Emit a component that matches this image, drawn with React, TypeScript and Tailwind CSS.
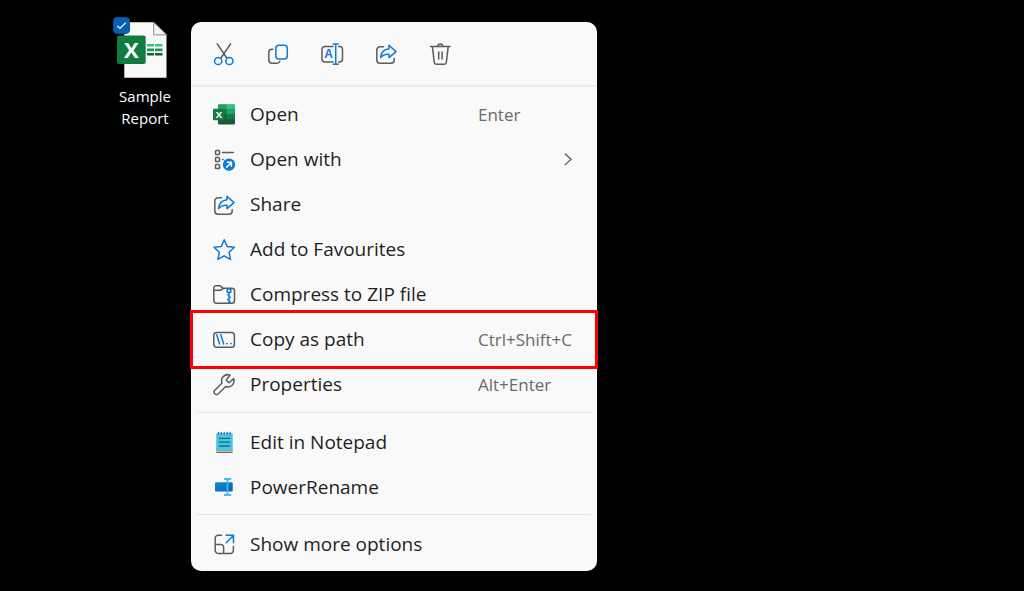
import type { ReactNode } from "react";

const GREY = "#5c5c5c";
const BLUE = "#0a7bd6";

function Icon({ children }: { children: ReactNode }) {
  return (
    <svg
      viewBox="0 0 24 24"
      className="size-6 shrink-0"
      fill="none"
      stroke={GREY}
      strokeWidth="1.5"
      strokeLinecap="round"
      strokeLinejoin="round"
      aria-hidden="true"
    >
      {children}
    </svg>
  );
}

const CutIcon = () => (
  <Icon>
    <path d="M5.2 1.8 14.8 16M18.6 1.8 9 16" />
    <circle cx="6.2" cy="19" r="3.6" stroke={BLUE} />
    <circle cx="17.4" cy="19" r="3.6" stroke={BLUE} />
  </Icon>
);

const CopyIcon = () => (
  <Icon>
    <path d="M6.8 7.3H6A3.2 3.2 0 0 0 2.8 10.5V18A3.2 3.2 0 0 0 6 21.2H10.8A3.2 3.2 0 0 0 13.8 19.2" />
    <rect x="9.9" y="3.3" width="11.4" height="13.8" rx="3" stroke={BLUE} />
  </Icon>
);

const RenameIcon = () => (
  <Icon>
    <path d="M13 4.5H5A3 3 0 0 0 2 7.500V17A3 3 0 0 0 5 20H13M18.500 4.500H19.500A3 3 0 0 1 22.500 7.500V17A3 3 0 0 1 19.500 20H18.500" />
    <path d="M15.700 2V22.300M12.700 2H18.700M12.700 22.300H18.700" stroke={BLUE} strokeLinecap="butt" />
    <text
      x="8.500"
      y="16.200"
      textAnchor="middle"
      fontSize="12"
      fontFamily="Liberation Sans, sans-serif"
      fontWeight="700"
      fill={BLUE}
      stroke="none"
    >
      A
    </text>
  </Icon>
);

const ShareIcon = () => (
  <Icon>
    <path d="M9.500 4.800H6A3.200 3.200 0 0 0 2.800 8V18A3.200 3.200 0 0 0 6 21.200H17A3.200 3.200 0 0 0 20.200 18V16.500" />
    <path
      d="M15 3.300 22 9.600 15 15.600V12.300C11.500 12 8.800 13 6.600 15.600 7 10.500 9.800 7.200 15 6.700Z"
      stroke={BLUE}
    />
  </Icon>
);

const DeleteIcon = () => (
  <Icon>
    <path d="M2.600 4.600H22M4.400 4.600 6.300 20.600A2 2 0 0 0 8.200 22.200H16.400A2 2 0 0 0 18.300 20.600L20.200 4.600M9.800 4.400A2.500 2.500 0 0 1 14.800 4.400M10.700 10V17M14.100 10V17" />
  </Icon>
);

const ExcelIcon = () => (
  <Icon>
    <g stroke="none">
      <rect x="6" y="1.500" width="17" height="20" rx="1.200" fill="#185c37" />
      <path d="M7.200 1.500H14.500V6.500H6V2.700A1.200 1.200 0 0 1 7.200 1.500Z" fill="#21a366" />
      <path d="M14.500 1.500H21.800A1.200 1.200 0 0 1 23 2.700V6.500H14.500Z" fill="#33c481" />
      <path d="M6 6.500H14.500V11.500H6Z" fill="#107c41" />
      <path d="M14.500 6.500H23V11.500H14.500Z" fill="#21a366" />
      <path d="M14.500 11.500H23V16.500H14.500Z" fill="#107c41" />
      <rect x="1" y="5.800" width="11.500" height="11.500" rx="1" fill="#107c41" />
      <text
        x="6.800"
        y="15"
        textAnchor="middle"
        fontSize="9.500"
        fontFamily="Open Sans, sans-serif"
        fontWeight="700"
        fill="#ffffff"
      >
        X
      </text>
    </g>
  </Icon>
);

const OpenWithIcon = () => (
  <Icon>
    <rect x="3.500" y="2.600" width="4" height="4" rx="0.800" />
    <rect x="3.500" y="9.600" width="4" height="4" rx="0.800" />
    <rect x="3.500" y="16.600" width="4" height="4" rx="0.800" />
    <path d="M10.500 4.500H21.300M10.500 11.500H11" />
    <circle cx="17" cy="16.700" r="6.200" fill={BLUE} stroke="none" />
    <path d="M14.600 19.100 19.200 14.500M15.400 14.300H19.400V18.300" stroke="#ffffff" />
  </Icon>
);

const StarIcon = () => (
  <Icon>
    <path
      d="M12.200 1.800 15.200 8.600 22.400 9.300 17 14.200 18.500 21.400 12.200 17.800 5.900 21.400 7.400 14.200 2 9.300 9.200 8.600Z"
      stroke={BLUE}
    />
  </Icon>
);

const ZipIcon = () => (
  <Icon>
    <path d="M1.800 7.200V5A2.200 2.200 0 0 1 4 2.800H8.200L11.300 5.300H20A2.500 2.500 0 0 1 22.500 7.800V17.800A2.500 2.500 0 0 1 20 20.300H4.300A2.500 2.500 0 0 1 1.800 17.800V7.200H8.800L11.300 5.300" />
    <path
      d="M15.200 6H18.800V9.300H15.200ZM17 9.300V19.800M17 11.800H15.700M17 14.200H18.300M17 16.600H15.700M17 19H18.300"
      stroke={BLUE}
    />
  </Icon>
);

const PathIcon = () => (
  <Icon>
    <rect x="1.800" y="4.400" width="20.600" height="14.900" rx="3" />
    <path d="M4.700 6.800 7.600 16M8.800 6.800 11.700 16" stroke={BLUE} />
    <path d="M14.800 15.600H15M18.800 15.600H19" stroke={BLUE} strokeWidth="1.700" />
  </Icon>
);

const WrenchIcon = () => (
  <Icon>
    <path d="M14.700 6.300a1 1 0 0 0 0 1.400l1.600 1.600a1 1 0 0 0 1.400 0l3.900-3.700a6.100 6.100 0 0 1-8 7.900l-7.500 7.500a2.500 2.500 0 0 1-3.500-3.500l7.400-7.500a6.100 6.100 0 0 1 8.100-7.800z" />
  </Icon>
);

const NotepadIcon = () => (
  <Icon>
    <g stroke="none">
      <rect x="4.200" y="18" width="16.500" height="4" rx="0.800" fill="#a85a24" />
      <rect x="4.200" y="19" width="16.500" height="1.600" fill="#f3e9df" />
      <rect x="4.200" y="2.200" width="16.500" height="17.800" rx="1" fill="#4cc3e0" />
    </g>
    <path d="M6.500 1.300V3M9.300 1.300V3M12.200 1.300V3M15.100 1.300V3M18 1.300V3" stroke="#17668a" strokeWidth="1.200" />
    <path d="M7.300 7.400H17.600M7.300 11.200H17.600M7.300 15H17.600" stroke="#0e6f96" strokeWidth="1.300" />
  </Icon>
);

const PowerRenameIcon = () => (
  <Icon>
    <defs>
      <linearGradient id="rename-field" x1="0" y1="0" x2="1" y2="1">
        <stop offset="0" stopColor="#1389dc" />
        <stop offset="1" stopColor="#0b5fae" />
      </linearGradient>
    </defs>
    <rect x="3" y="6.200" width="17.700" height="9.300" rx="1" fill="url(#rename-field)" stroke="none" />
    <path
      d="M15.500 3.200V19M12.700 3H14.300L15.500 3.800 16.700 3H18.500M12.700 19H14.300L15.500 18.200 16.700 19H18.500"
      stroke="#35bdf0"
      strokeWidth="1.800"
    />
  </Icon>
);

const MoreIcon = () => (
  <Icon>
    <path d="M9.600 2.200H6.400A3 3 0 0 0 3.200 5.200V17.200A3 3 0 0 0 6.400 20.400H18.400A3 3 0 0 0 21.400 17.200V13.500M3.200 11.600H8.900A2.600 2.600 0 0 1 11.600 14.200V20.400" />
    <path d="M14.200 9.800 21.400 2.400M14 2.200H21.500V9.800" stroke={BLUE} />
  </Icon>
);

const ChevronIcon = () => (
  <svg viewBox="0 0 10 16" className="h-4 w-2.5" fill="none" stroke={GREY} strokeWidth="1.300" aria-hidden="true">
    <path d="M1.800 1.500 8 7.300 1.800 13.100" />
  </svg>
);

interface ItemProps {
  icon: ReactNode;
  label: string;
  shortcut?: string;
  submenu?: boolean;
  highlighted?: boolean;
}

function MenuItem({ icon, label, shortcut, submenu, highlighted }: ItemProps) {
  return (
    <li className="relative" role="none">
      <button
        type="button"
        role="menuitem"
        className="flex h-[45px] w-full items-center gap-3.5 pr-5 pl-[21px] text-left text-[19px] text-[#1f1f1f]"
      >
        {icon}
        <span className="grow whitespace-nowrap">{label}</span>
        {shortcut && <span className="w-[99px] shrink-0 whitespace-nowrap text-[17px] text-[#6a6a6a]">{shortcut}</span>}
        {submenu && (
          <span className="mr-1">
            <ChevronIcon />
          </span>
        )}
      </button>
      {highlighted && (
        <span className="pointer-events-none absolute -inset-x-px -inset-y-[7px] z-10 border-3 border-[#fb0000]" />
      )}
    </li>
  );
}

const actions = [
  { label: "Cut", icon: <CutIcon /> },
  { label: "Copy", icon: <CopyIcon /> },
  { label: "Rename", icon: <RenameIcon /> },
  { label: "Share", icon: <ShareIcon /> },
  { label: "Delete", icon: <DeleteIcon /> },
];

function DesktopFile() {
  return (
    <label className="mt-4 flex w-[92px] shrink-0 flex-col text-center text-[15px] leading-[22px] text-white">
      <span className="relative mb-[5px] ml-[13px] block w-14">
        <svg viewBox="0 0 56 64" className="h-16 w-14" aria-hidden="true">
          <path d="M12.300 6.200H41.500L54.500 18.800V61.700H12.300Z" fill="#fafafa" />
          <path d="M41.700 6.200V18.800H54.500Z" fill="#f4f4f4" stroke="#8a8a8a" strokeWidth="1" />
          <path d="M35 28H42V30.600H35ZM43 28H50.500V30.600H43Z" fill="#33c481" />
          <path d="M35 32.600H42V35.200H35ZM43 32.600H50.500V35.200H43Z" fill="#189a57" />
          <path d="M35 37H42V39.600H35ZM43 37H50.500V39.600H43Z" fill="#185c37" />
          <rect x="5" y="19.600" width="28.700" height="28.500" rx="2" fill="#107c41" />
          <text
            x="19.300"
            y="42"
            textAnchor="middle"
            fontSize="22"
            fontFamily="Open Sans, sans-serif"
            fontWeight="700"
            fill="#ffffff"
          >
            X
          </text>
        </svg>
        <input
          type="checkbox"
          defaultChecked
          className="absolute top-px left-px size-[17px] appearance-none rounded border border-[#0a4f9e] bg-[#0560b6]"
        />
        <svg
          viewBox="0 0 17 17"
          className="pointer-events-none absolute top-px left-px size-[17px]"
          fill="none"
          stroke="#ffffff"
          strokeWidth="1.200"
          aria-hidden="true"
        >
          <path d="M4.300 8.800 7 11.500 12.800 5.700" />
        </svg>
      </span>
      <span>
        Sample
        <br />
        Report
      </span>
    </label>
  );
}

export default function App() {
  return (
    <main className="flex min-h-screen items-start bg-black pl-[99px] font-['Open_Sans','Noto_Sans',sans-serif]">
      <DesktopFile />
      <div
        role="menu"
        aria-label="Sample Report"
        className="mt-[22px] mb-5 w-full max-w-[406px] rounded-[10px] bg-[#f9f9f9]"
      >
        <div className="flex h-[65px] items-center gap-[30px] border-b-2 border-[#ebebeb] pl-[21px]">
          {actions.map((action) => (
            <button key={action.label} type="button" aria-label={action.label}>
              {action.icon}
            </button>
          ))}
        </div>
        <ul className="py-[5px]">
          <MenuItem icon={<ExcelIcon />} label="Open" shortcut="Enter" />
          <MenuItem icon={<OpenWithIcon />} label="Open with" submenu />
          <MenuItem icon={<ShareIcon />} label="Share" />
          <MenuItem icon={<StarIcon />} label="Add to Favourites" />
          <MenuItem icon={<ZipIcon />} label="Compress to ZIP file" />
          <MenuItem icon={<PathIcon />} label="Copy as path" shortcut="Ctrl+Shift+C" highlighted />
          <MenuItem icon={<WrenchIcon />} label="Properties" shortcut="Alt+Enter" />
        </ul>
        <hr className="mx-1.5 border-[#e4e4e4]" />
        <ul className="pt-[7px] pb-1">
          <MenuItem icon={<NotepadIcon />} label="Edit in Notepad" />
          <MenuItem icon={<PowerRenameIcon />} label="PowerRename" />
        </ul>
        <hr className="mx-1.5 border-[#e4e4e4]" />
        <ul className="pt-[7px] pb-1">
          <MenuItem icon={<MoreIcon />} label="Show more options" />
        </ul>
      </div>
    </main>
  );
}
